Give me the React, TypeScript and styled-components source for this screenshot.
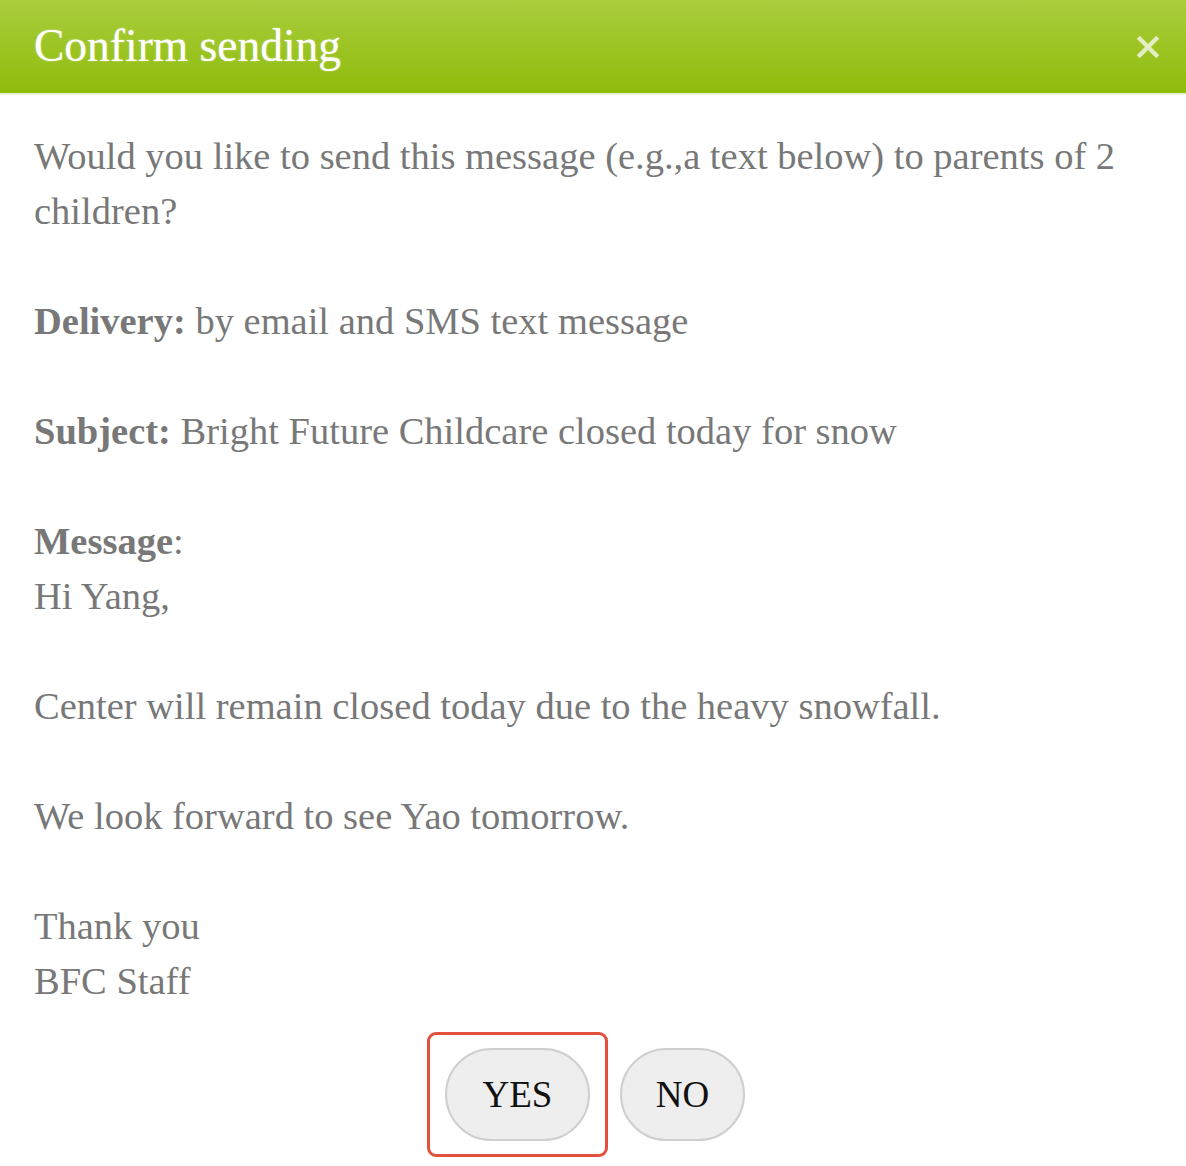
import React from "react";
import styled, { createGlobalStyle } from "styled-components";

const Global = createGlobalStyle`
  html, body { margin: 0; padding: 0; background: #ffffff; }
  body { font-family: "Liberation Serif", "Times New Roman", serif; }
`;

const Dialog = styled.div`
  width: 1186px;
  min-height: 1166px;
  background: #fff;
  display: flex;
  flex-direction: column;
`;

const Header = styled.header`
  height: 95px;
  background: linear-gradient(to bottom, #a9cd3d 0%, #8fbc0b 100%);
  border-bottom: 2px solid #e9f3cf;
  display: flex;
  align-items: center;
  justify-content: space-between;
  padding: 0 24px 0 34px;
  box-sizing: border-box;
`;

const Title = styled.h1`
  margin: 0;
  font-family: "Liberation Serif", "Times New Roman", serif;
  font-weight: normal;
  font-size: 45.5px;
  color: #ffffff;
  text-shadow: 0 0 2px rgba(255,255,255,0.5);
  line-height: 1;
  padding-bottom: 2px;
`;

const Close = styled.button`
  background: none;
  border: 0;
  padding: 0;
  width: 28px;
  height: 28px;
  display: flex;
  align-items: center;
  justify-content: center;
  cursor: pointer;
`;

const Body = styled.div`
  padding: 34px 34px 0 34px;
  font-size: 38.5px;
  line-height: 55px;
  color: #787878;
`;

const Para = styled.p`
  margin: 0 0 55px 0;
  &:last-child { margin-bottom: 0; }
`;

const Label = styled.b`
  font-weight: bold;
`;

const Actions = styled.div`
  display: flex;
  justify-content: center;
  align-items: center;
  gap: 12px;
  padding: 23px 14px 0 0;
`;

const Focus = styled.span`
  display: inline-flex;
  padding: 13px 15px;
  border: 3px solid #e4503e;
  border-radius: 9px;
`;

const Pill = styled.button<{ $w: number }>`
  width: ${(p) => p.$w}px;
  height: 93px;
  border-radius: 47px;
  border: 2px solid #cfcfcf;
  background: #eeeeee;
  color: #111;
  font-family: "Liberation Serif", "Times New Roman", serif;
  font-size: 37px;
  padding: 0;
  cursor: pointer;
`;

export default function App() {
  return (
    <>
      <Global />
      <Dialog>
        <Header>
          <Title>Confirm sending</Title>
          <Close aria-label="close">
            <svg width="26" height="26" viewBox="0 0 24 24">
              <path d="M3 3 L21 21 M21 3 L3 21" stroke="rgba(255,255,255,0.72)" strokeWidth="4" strokeLinecap="butt" />
            </svg>
          </Close>
        </Header>
        <Body>
          <Para>Would you like to send this message (e.g.,a text below) to parents of 2 children?</Para>
          <Para><Label>Delivery:</Label> by email and SMS text message</Para>
          <Para><Label>Subject:</Label> Bright Future Childcare closed today for snow</Para>
          <Para><Label>Message</Label>:<br />Hi Yang,</Para>
          <Para>Center will remain closed today due to the heavy snowfall.</Para>
          <Para>We look forward to see Yao tomorrow.</Para>
          <Para>Thank you<br />BFC Staff</Para>
        </Body>
        <Actions>
          <Focus>
            <Pill $w={145}>YES</Pill>
          </Focus>
          <Pill $w={125}>NO</Pill>
        </Actions>
      </Dialog>
    </>
  );
}
